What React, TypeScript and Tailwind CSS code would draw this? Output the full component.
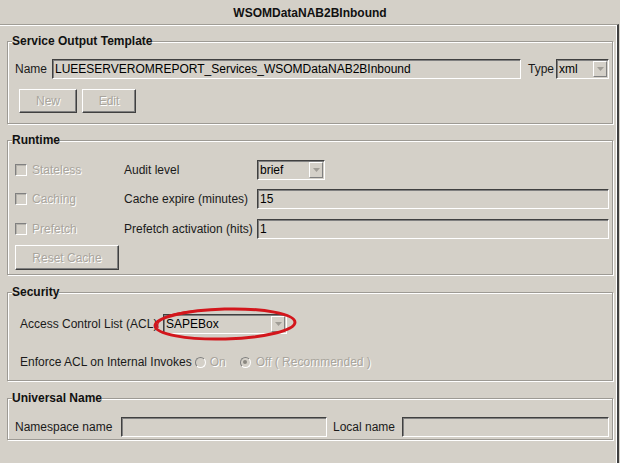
import type { ReactNode } from "react";

const dim = "text-[#a9a59d] [text-shadow:1px_1px_0_#fff]";

function Group({ title, className, children }: { title: string; className: string; children: ReactNode }) {
  return (
    <div className={`border border-[#9d9a94] shadow-[inset_1px_1px_0_#fff,1px_1px_0_#fff] ${className}`}>
      <div className="-mt-[8px] ml-[4px] w-fit bg-[#d4d0c8] font-bold leading-[14px] text-[#111]">{title}</div>
      {children}
    </div>
  );
}

function Field({ value, className }: { value?: string; className: string }) {
  return (
    <div
      className={`flex h-[20px] items-center border border-t-[#404040] border-l-[#404040] border-r-white border-b-white bg-[#d4d0c8] pl-[2px] text-black shadow-[inset_1px_1px_0_#808080] ${className}`}
    >
      {value}
    </div>
  );
}

function Combo({ value, className }: { value: string; className: string }) {
  return (
    <div
      className={`flex h-[20px] items-center border border-t-[#404040] border-l-[#404040] border-r-white border-b-white bg-[#d4d0c8] text-black shadow-[inset_1px_1px_0_#808080] ${className}`}
    >
      <span className="flex-1 pl-[2px]">{value}</span>
      <div className="mr-[1px] flex h-[16px] w-[14px] items-center justify-center border border-t-white border-l-white border-r-[#808080] border-b-[#808080]">
        <svg width="7" height="4" viewBox="0 0 7 4">
          <path d="M0 0h7L3.5 4z" fill="#a09d96" />
        </svg>
      </div>
    </div>
  );
}

function Btn({ label, className }: { label: string; className: string }) {
  return (
    <div
      className={`flex items-center justify-center border border-t-white border-l-white border-r-[#404040] border-b-[#404040] shadow-[inset_-1px_-1px_0_#808080] ${dim} ${className}`}
    >
      {label}
    </div>
  );
}

function Check({ label }: { label: string }) {
  return (
    <div className="flex w-[116px] items-center pl-[7px]">
      <span className="h-[12px] w-[12px] border border-t-[#808080] border-l-[#808080] border-r-white border-b-white shadow-[inset_1px_1px_0_#b5b2ab]" />
      <span className={`ml-[5px] ${dim}`}>{label}</span>
    </div>
  );
}

function Radio({ checked }: { checked?: boolean }) {
  return (
    <span className="flex h-[11px] w-[11px] items-center justify-center rounded-full border border-t-[#808080] border-l-[#808080] border-r-white border-b-white">
      {checked && <span className="h-[4px] w-[4px] rounded-full bg-[#8a8780]" />}
    </span>
  );
}

export default function App() {
  return (
    <div className="flex h-[463px] w-[620px] flex-col bg-[#d4d0c8] font-['Liberation_Sans',Arial,sans-serif] text-[12px] text-[#1a1a1a]">
      {/* title */}
      <div className="flex h-[24px] items-center justify-center pt-[2px] font-bold text-[#111]">WSOMDataNAB2BInbound</div>

      <div className="w-[619px] flex-1 border-t border-r-2 border-t-[#a09d96] border-r-[#404040] pr-[4px] pl-[7px] shadow-[inset_0_1px_0_#fff,inset_-1px_0_0_#fff]">
        {/* Service Output Template */}
        <Group title="Service Output Template" className="mt-[16px] pb-[10px]">
          <div className="mt-[11px] flex h-[20px] items-center pr-[3px] pl-[7px]">
            <span className="w-[37px]">Name</span>
            <Field value="LUEESERVEROMREPORT_Services_WSOMDataNAB2BInbound" className="flex-1" />
            <span className="ml-[7px] w-[28px]">Type</span>
            <Combo value="xml" className="w-[53px]" />
          </div>
          <div className="mt-[10px] flex gap-[5px] pl-[11px]">
            <Btn label="New" className="h-[24px] w-[58px]" />
            <Btn label="Edit" className="h-[24px] w-[54px]" />
          </div>
        </Group>

        {/* Runtime */}
        <Group title="Runtime" className="mt-[16px] pb-[4px]">
          <div className="mt-[13px] flex h-[20px] items-center pr-[3px]">
            <Check label="Stateless" />
            <span className="w-[133px]">Audit level</span>
            <Combo value="brief" className="w-[68px]" />
          </div>
          <div className="mt-[9px] flex h-[20px] items-center pr-[3px]">
            <Check label="Caching" />
            <span className="w-[133px]">Cache expire (minutes)</span>
            <Field value="15" className="flex-1" />
          </div>
          <div className="mt-[10px] flex h-[20px] items-center pr-[3px]">
            <Check label="Prefetch" />
            <span className="w-[133px]">Prefetch activation (hits)</span>
            <Field value="1" className="flex-1" />
          </div>
          <Btn label="Reset Cache" className="mt-[6px] ml-[7px] h-[25px] w-[104px]" />
        </Group>

        {/* Security */}
        <Group title="Security" className="mt-[17px] pb-[8px]">
          <div className="mt-[15px] flex h-[20px] items-center pl-[12px]">
            <span className="w-[143px] whitespace-nowrap">Access Control List (ACL)</span>
            <div className="relative w-[124px]">
              <Combo value="SAPEBox" className="w-full" />
              <svg className="pointer-events-none absolute top-[-8px] left-[-11px]" width="146" height="36" viewBox="0 0 146 36">
                <ellipse cx="73" cy="18" rx="70" ry="15" fill="none" stroke="#d3161c" strokeWidth="3" transform="rotate(-1.5 73 18)" />
                <path d="M6 22 C 3 15, 14 7, 42 5" fill="none" stroke="#d3161c" strokeWidth="1.6" />
              </svg>
            </div>
          </div>
          <div className="mt-[18px] flex h-[20px] items-center pl-[12px]">
            <span>Enforce ACL on Internal Invokes</span>
            <span className="ml-[3px]"><Radio /></span>
            <span className={`ml-[4px] ${dim}`}>On</span>
            <span className="ml-[14px]"><Radio checked /></span>
            <span className={`ml-[5px] ${dim}`}>Off ( Recommended )</span>
          </div>
        </Group>

        {/* Universal Name */}
        <Group title="Universal Name" className="mt-[17px] pb-[2px]">
          <div className="mt-[12px] flex h-[20px] items-center pr-[3px] pl-[7px]">
            <span className="w-[106px]">Namespace name</span>
            <Field className="w-[206px]" />
            <span className="ml-[6px] w-[69px]">Local name</span>
            <Field className="flex-1" />
          </div>
        </Group>
      </div>
    </div>
  );
}
